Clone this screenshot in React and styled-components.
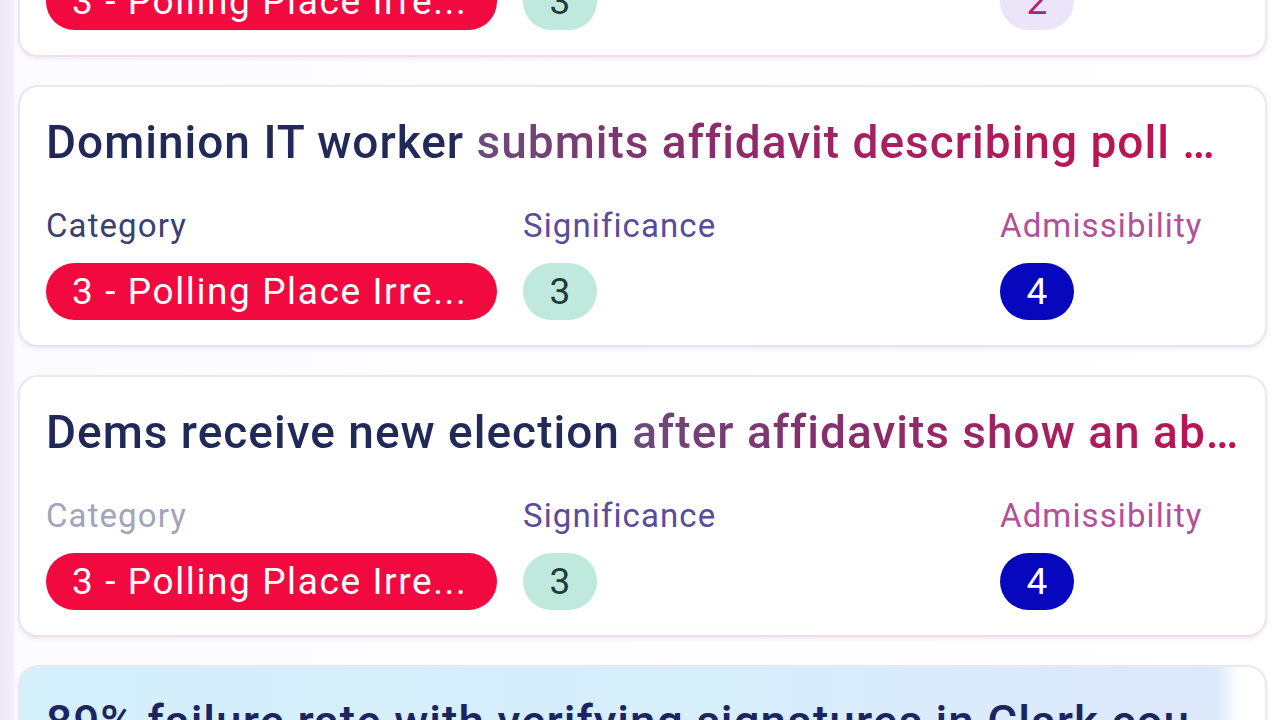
import styled, { createGlobalStyle } from 'styled-components';

const GlobalStyle = createGlobalStyle`
  html, body {
    margin: 0;
    padding: 0;
  }
  body {
    font-family: Roboto, "Noto Sans", sans-serif;
    background: linear-gradient(90deg, #ede7f9 0px, #f4eefb 13px, #fcfcfe 16px, #ffffff 100%);
    overflow: hidden;
  }
`

const items = [
  {
    title: 'Ballot counting observers describe irregularities at the cent…',
    split: 36,
    sig: { value: 3, kind: 'mint' },
    adm: { value: 2, kind: 'lavender' },
  },
  {
    title: 'Dominion IT worker submits affidavit describing poll …',
    split: 36,
    sig: { value: 3, kind: 'mint' },
    adm: { value: 4, kind: 'navy' },
  },
  {
    title: 'Dems receive new election after affidavits show an ab…',
    split: 48,
    faded: true,
    sig: { value: 3, kind: 'mint' },
    adm: { value: 4, kind: 'navy' },
  },
  {
    title: '89% failure rate with verifying signatures in Clark cou…',
    highlight: true,
    sig: { value: 3, kind: 'mint' },
    adm: { value: 4, kind: 'navy' },
  },
]

const App = () => {
  return (
    <Page>
      <GlobalStyle />
      <List>
        {items.map((item, i) => (
          <Card key={i} $highlight={item.highlight}>
            <Title $split={item.split} $plain={item.highlight}>{item.title}</Title>
            <Fields>
              <Field>
                <Label $tone={item.faded ? 'faded' : 'navy'}>Category</Label>
                <Pill>3 - Polling Place Irre...</Pill>
              </Field>
              <Field>
                <Label $tone="purple">Significance</Label>
                <Badge $kind={item.sig.kind}>{item.sig.value}</Badge>
              </Field>
              <Field>
                <Label $tone="pink">Admissibility</Label>
                <Badge $kind={item.adm.kind}>{item.adm.value}</Badge>
              </Field>
            </Fields>
          </Card>
        ))}
      </List>
    </Page>
  )
}

export default App;

const Page = styled.div`
height: 720px;
overflow: hidden;
`

// list is scrolled: the first card sits mostly above the viewport
const List = styled.div`
display: flex;
flex-direction: column;
gap: 28px;
padding-left: 18px;
width: 1249px;
margin-top: -205px;
`

const Card = styled.div`
box-sizing: border-box;
height: 262px;
border: 2px solid #ebe7f1;
border-bottom-color: #efdfec;
border-radius: 20px;
padding: 29px 26px 25px 26px;
background: ${p => p.$highlight
  ? 'linear-gradient(90deg, #d3f0fb 0%, #d8eefb 60%, #dde8fb 96%, #ffffff 98%)'
  : '#ffffff'};
box-shadow: 0 2px 4px rgba(214, 196, 228, 0.35);
`

const Title = styled.div`
display: inline-block;
font-size: 46px;
font-weight: 500;
line-height: 52px;
white-space: nowrap;
letter-spacing: 1px;
color: #1c2560;
${p => !p.$plain && `
  background: linear-gradient(90deg,
    #1f2857 0%,
    #232a5a ${p.$split}%,
    #6a4c7a ${p.$split + 1}%,
    #83306e ${p.$split + 16}%,
    #a91f5f ${p.$split + 38}%,
    #c0104f 100%);
  -webkit-background-clip: text;
  background-clip: text;
  color: transparent;
`}
`

const Fields = styled.div`
display: grid;
grid-template-columns: 477px 477px 1fr;
margin-top: 40px;
`

const Field = styled.div`
display: flex;
flex-direction: column;
align-items: flex-start;
gap: 19px;
`

const labelColors = {
  navy: '#3b3f74',
  faded: '#a3a3bb',
  purple: '#5a4c9c',
  pink: '#b2519a',
}

const Label = styled.div`
font-size: 33px;
line-height: 36px;
letter-spacing: 1.1px;
color: ${p => labelColors[p.$tone]};
`

const Pill = styled.div`
box-sizing: border-box;
width: 451px;
height: 57px;
border-radius: 29px;
background: #f2093f;
color: #ffffff;
font-size: 37px;
line-height: 57px;
letter-spacing: 1.6px;
padding: 0 26px;
white-space: nowrap;
overflow: hidden;
`

const badgeColors = {
  mint: { bg: '#bfe9dd', fg: '#203a3a' },
  navy: { bg: '#0707bd', fg: '#ffffff' },
  lavender: { bg: '#ece4f9', fg: '#b3207a' },
}

const Badge = styled.div`
width: 74px;
height: 57px;
border-radius: 29px;
display: flex;
align-items: center;
justify-content: center;
font-size: 37px;
background: ${p => badgeColors[p.$kind].bg};
color: ${p => badgeColors[p.$kind].fg};
`
